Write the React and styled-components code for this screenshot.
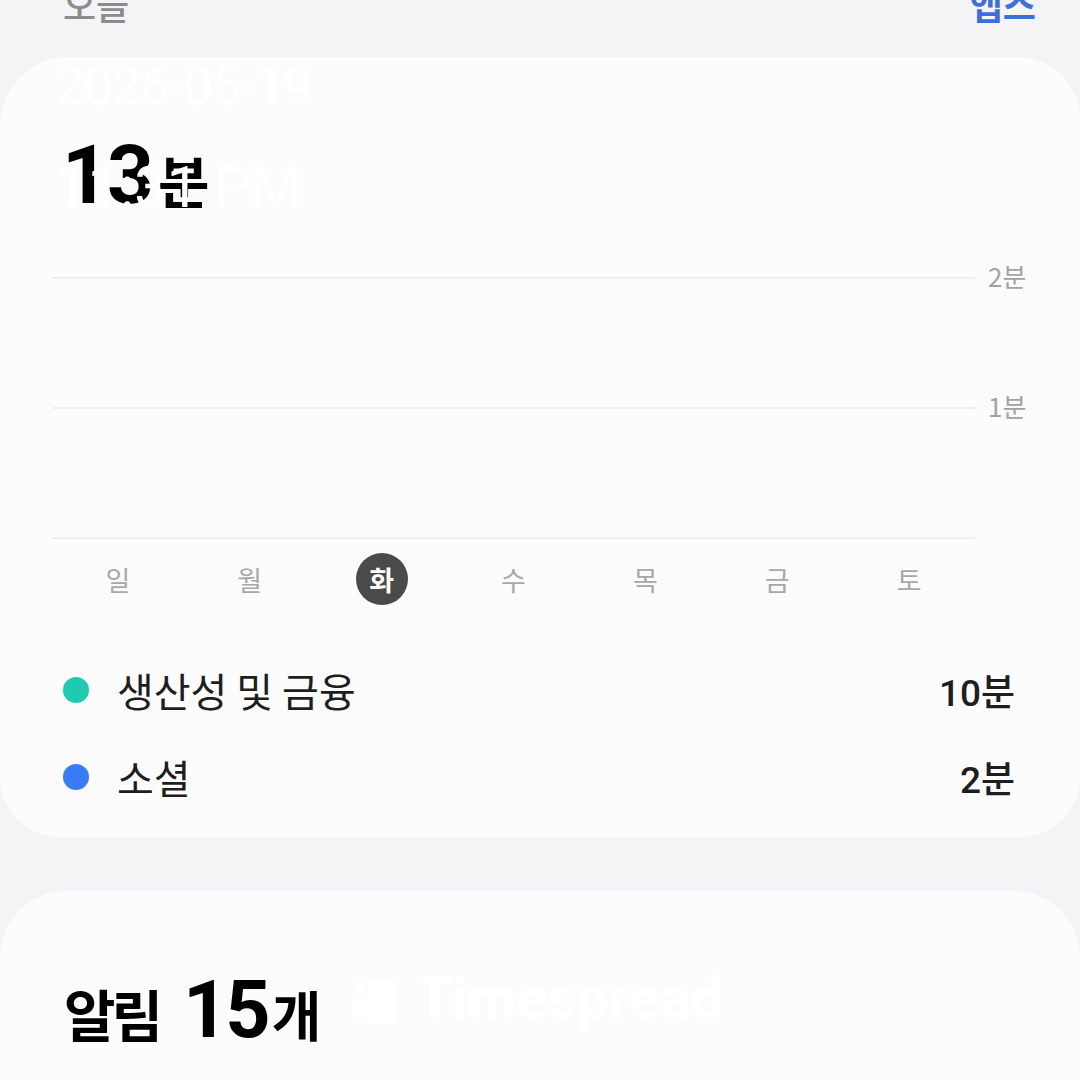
import React from "react";
import styled, { createGlobalStyle } from "styled-components";

const days = ["일", "월", "화", "수", "목", "금", "토"];
const today = 2;

const categories = [
  { name: "생산성 및 금융", time: "10분", color: "#22c9b1" },
  { name: "소셜", time: "2분", color: "#3a7cf6" },
];

const App = () => {
  return (
    <>
      <GlobalStyle />
      <Page>
        <Header>
          <HeaderLabel>오늘</HeaderLabel>
          <HeaderLink>앱스</HeaderLink>
        </Header>

        <Card>
          <Total>
            13<Unit>분</Unit>
          </Total>

          <Chart>
            <GridRow>
              <GridLine />
              <AxisLabel>2분</AxisLabel>
            </GridRow>
            <GridRow>
              <GridLine />
              <AxisLabel>1분</AxisLabel>
            </GridRow>
            <BaseLine />
            <DayRow>
              {days.map((d, i) => (
                <Day key={d}>
                  <DayMark active={i === today}>{d}</DayMark>
                </Day>
              ))}
            </DayRow>
          </Chart>

          <Legend>
            {categories.map((c) => (
              <LegendRow key={c.name}>
                <Dot color={c.color} />
                <LegendName>{c.name}</LegendName>
                <LegendTime>{c.time}</LegendTime>
              </LegendRow>
            ))}
          </Legend>
        </Card>

        <NoticeCard>
          <NoticeTitle>
            <NoticeWord>알림</NoticeWord>
            <NoticeCount>15</NoticeCount>
            <NoticeUnit>개</NoticeUnit>
          </NoticeTitle>
        </NoticeCard>

        {/* watermark stamped over the screenshot */}
        <Stamp>
          <StampDate>2026-05-19</StampDate>
          <StampTime>11:31 PM</StampTime>
        </Stamp>
        <Brand>
          <svg width="43" height="41" viewBox="0 0 43 41">
            <rect x="0" y="0" width="12" height="8" fill="#ffffff" />
            <rect x="0" y="11" width="12" height="30" fill="#ffffff" />
            <rect x="14" y="0" width="29" height="8" fill="#ffffff" />
            <rect x="14" y="11" width="29" height="30" fill="#ffffff" />
          </svg>
          <BrandName>Timespread</BrandName>
        </Brand>
      </Page>
    </>
  );
};

const GlobalStyle = createGlobalStyle`
  html, body {
    margin: 0;
    padding: 0;
    background: #f4f4f6;
  }
  body {
    font-family: "Noto Sans CJK KR", "Noto Sans", sans-serif;
    overflow: hidden;
  }
`;

const Page = styled.div`
  position: relative;
  width: 1080px;
  height: 1080px;
  overflow: hidden;
  background: #f4f4f6;
`;

const Header = styled.div`
  height: 57px;
  display: flex;
  justify-content: space-between;
  align-items: flex-start;
  padding: 0 44px 0 63px;
  box-sizing: border-box;
`;

const HeaderLabel = styled.div`
  margin-top: -14px;
  font-size: 36px;
  line-height: 36px;
  font-weight: 500;
  color: #8c8c8c;
`;

const HeaderLink = styled(HeaderLabel)`
  font-weight: 700;
  color: #3d6fd8;
`;

const Card = styled.div`
  background: #fcfcfc;
  border-radius: 68px 62px 60px 60px;
  padding: 77px 65px 30px 52px;
  height: 780px;
  box-sizing: border-box;
`;

const Total = styled.div`
  padding-left: 10px;
  font-family: "Roboto", "Noto Sans CJK KR", sans-serif;
  font-size: 82px;
  line-height: 82px;
  font-weight: 700;
  letter-spacing: -2px;
  color: #000;
`;

const Unit = styled.span`
  margin-left: 6px;
  font-family: "Noto Sans CJK KR", sans-serif;
  font-size: 56px;
  line-height: 1;
  letter-spacing: 0;
`;

const Chart = styled.div`
  margin-top: 61px;
`;

const GridRow = styled.div`
  display: flex;
  align-items: flex-start;
  height: 130px;
`;

const GridLine = styled.div`
  width: 923px;
  flex-shrink: 0;
  border-top: 2px solid #eeeeee;
`;

const BaseLine = styled(GridLine)``;

const AxisLabel = styled.div`
  margin: -14px 0 0 13px;
  font-size: 26px;
  line-height: 26px;
  white-space: nowrap;
  color: #a3a3a3;
`;

const DayRow = styled.div`
  width: 923px;
  margin-top: 14px;
  display: grid;
  grid-template-columns: repeat(7, 1fr);
`;

const Day = styled.div`
  display: flex;
  justify-content: center;
  align-items: center;
  height: 52px;
`;

const DayMark = styled.div`
  width: 52px;
  height: 52px;
  border-radius: 50%;
  display: flex;
  justify-content: center;
  align-items: center;
  font-size: 27px;
  font-weight: ${(p) => (p.active ? 700 : 400)};
  color: ${(p) => (p.active ? "#ffffff" : "#a8a8a8")};
  background: ${(p) => (p.active ? "#4a4a4a" : "transparent")};
`;

const Legend = styled.div`
  margin-top: 55px;
  padding-left: 11px;
  display: flex;
  flex-direction: column;
  gap: 27px;
`;

const LegendRow = styled.div`
  display: flex;
  align-items: center;
  height: 60px;
`;

const Dot = styled.span`
  width: 26px;
  height: 26px;
  border-radius: 50%;
  background: ${(p) => p.color};
  flex-shrink: 0;
`;

const LegendName = styled.div`
  margin-left: 28px;
  flex: 1;
  font-size: 40px;
  font-weight: 400;
  color: #1e1e1e;
`;

const LegendTime = styled.div`
  font-family: "Roboto", "Noto Sans CJK KR", sans-serif;
  font-size: 37px;
  font-weight: 500;
  color: #1e1e1e;
`;

const NoticeCard = styled.div`
  margin-top: 54px;
  background: #fcfcfc;
  border-radius: 66px 66px 0 0;
  padding: 80px 0 0 64px;
  height: 400px;
  box-sizing: border-box;
`;

const NoticeTitle = styled.div`
  display: flex;
  align-items: baseline;
  color: #000;
  font-weight: 700;
`;

const NoticeWord = styled.span`
  font-size: 56px;
  line-height: 1;
  letter-spacing: -4px;
`;

const NoticeCount = styled.span`
  margin-left: 24px;
  font-family: "Roboto", sans-serif;
  font-size: 79px;
  line-height: 1;
  letter-spacing: -3px;
`;

const NoticeUnit = styled.span`
  margin-left: 4px;
  font-size: 54px;
  line-height: 1;
`;

const Stamp = styled.div`
  position: absolute;
  left: 55px;
  top: 62px;
  display: flex;
  flex-direction: column;
  font-family: "Roboto", sans-serif;
  color: #ffffff;
  pointer-events: none;
`;

const StampDate = styled.div`
  font-size: 51px;
  line-height: 50px;
`;

const StampTime = styled.div`
  margin-top: 46px;
  font-size: 58px;
  line-height: 58px;
`;

const Brand = styled.div`
  position: absolute;
  left: 354px;
  top: 982px;
  display: flex;
  align-items: flex-start;
  gap: 20px;
  pointer-events: none;
`;

const BrandName = styled.div`
  margin-top: -12px;
  font-family: "Roboto", sans-serif;
  font-size: 57px;
  line-height: 57px;
  font-weight: 700;
  color: #ffffff;
`;

export default App;
